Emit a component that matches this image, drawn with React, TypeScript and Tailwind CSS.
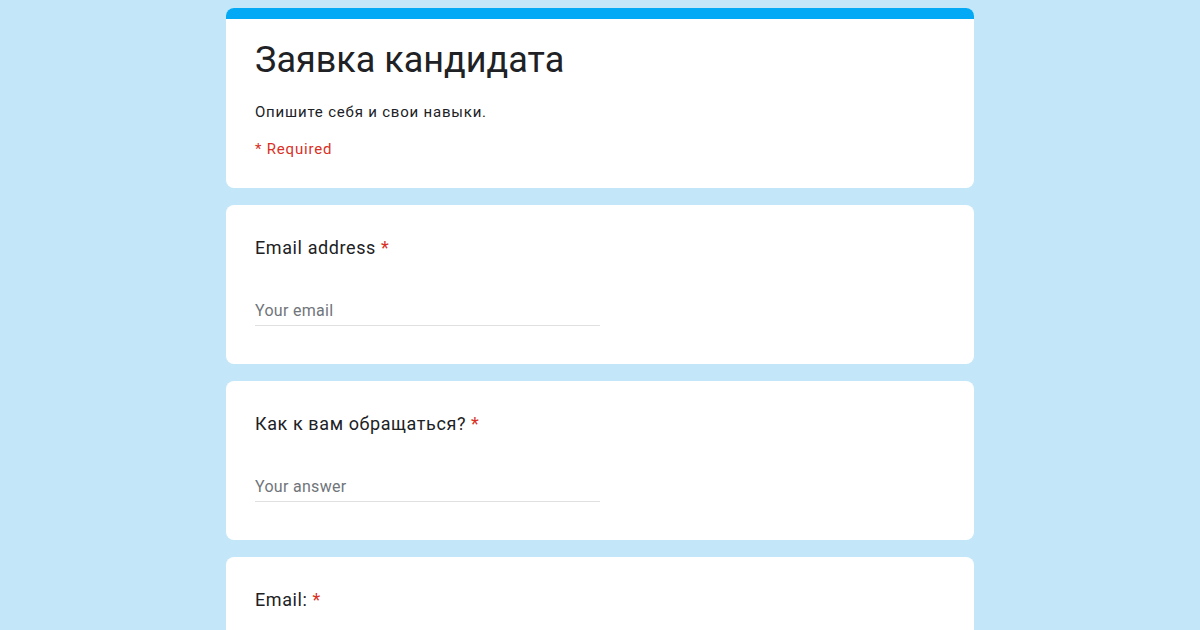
import React from 'react';

const Question = ({ label, placeholder }: { label: string; placeholder?: string }) => (
  <div className="w-[748px] rounded-lg bg-white px-[29px] pt-[31px] pb-[38px]">
    <div className="text-[18px] leading-6 tracking-[0.6px] text-[#202124] font-['Roboto',sans-serif]">
      {label} <span className="text-[#d93025]">*</span>
    </div>
    {placeholder && (
      <div className="mt-[39px] w-[345px] border-b border-[#e0e0e0] pb-[2px] text-[16px] leading-6 tracking-[0.3px] text-[#70757a] font-['Roboto',sans-serif]">
        {placeholder}
      </div>
    )}
  </div>
);

const App = () => {
  return (
    <div className="w-[1200px] h-[630px] overflow-hidden bg-[#c3e7f9] flex flex-col items-center gap-[17px] pt-[8px]">
      {/* Header card */}
      <div className="w-[748px] rounded-lg bg-white overflow-hidden shrink-0">
        <div className="h-[11px] bg-[#03a9f4]"></div>
        <div className="px-[29px] pt-[19px] pb-[29px] font-['Roboto',sans-serif]">
          <h1 className="text-[36px] leading-[44px] text-[#202124]">Заявка кандидата</h1>
          <p className="mt-[20px] text-[15px] leading-5 tracking-[0.8px] text-[#202124]">
            Опишите себя и свои навыки.
          </p>
          <p className="mt-[17px] text-[15px] leading-5 tracking-[0.8px] text-[#d93025]">* Required</p>
        </div>
      </div>
      <div className="shrink-0">
        <Question label="Email address" placeholder="Your email" />
      </div>
      <div className="shrink-0">
        <Question label="Как к вам обращаться?" placeholder="Your answer" />
      </div>
      <div className="shrink-0">
        <Question label="Email:" placeholder="Your answer" />
      </div>
    </div>
  );
};

export default App;
